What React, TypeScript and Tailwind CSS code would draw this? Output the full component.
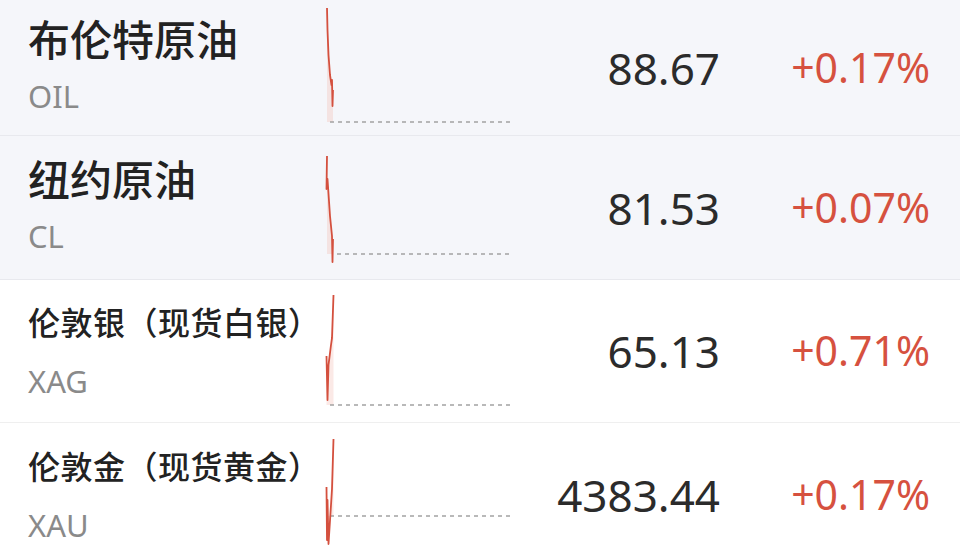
type Quote = {
  name: string;
  code: string;
  price: string;
  change: string;
  big: boolean;
  shaded: boolean;
  height: string;
  line: [number, number][];
  base: [number, number];
};

const quotes: Quote[] = [
  {
    name: '布伦特原油',
    code: 'OIL',
    price: '88.67',
    change: '+0.17%',
    big: true,
    shaded: true,
    height: 'h-[136px]',
    line: [[1, 8], [1.5, 30], [2.5, 55], [4, 75], [5.5, 85], [6, 80], [6.5, 106], [7, 90]],
    base: [122, 4],
  },
  {
    name: '纽约原油',
    code: 'CL',
    price: '81.53',
    change: '+0.07%',
    big: true,
    shaded: true,
    height: 'h-[144px]',
    line: [[1, 20], [0.5, 53], [1.5, 43], [4, 80], [6, 100], [6.5, 126], [7, 103]],
    base: [118, 11],
  },
  {
    name: '伦敦银（现货白银）',
    code: 'XAG',
    price: '65.13',
    change: '+0.71%',
    big: false,
    shaded: false,
    height: 'h-[143px]',
    line: [[0.5, 76], [1.5, 120], [2.5, 85], [5, 65], [6, 58], [7.5, 15]],
    base: [125, 4],
  },
  {
    name: '伦敦金（现货黄金）',
    code: 'XAU',
    price: '4383.44',
    change: '+0.17%',
    big: false,
    shaded: false,
    height: 'h-[144px]',
    line: [[0.5, 64], [1, 117], [1.5, 77], [2.5, 121], [5, 82], [6, 66], [7.5, 16]],
    base: [93, 4],
  },
];

function Spark({ q }: { q: Quote }) {
  const pts = q.line.map(([x, y]) => `${x},${y}`).join(' ');
  const first = q.line[0];
  const last = q.line[q.line.length - 1];
  const area = `${pts} ${last[0]},${q.base[0]} ${first[0]},${q.base[0]}`;
  return (
    <svg width="184" height="100%" className="block h-full overflow-visible">
      <polygon points={area} fill="#f2b7ad" opacity="0.3" />
      <line
        x1={q.base[1]}
        y1={q.base[0]}
        x2={184}
        y2={q.base[0]}
        stroke="#a3a3a3"
        strokeWidth="1.5"
        strokeDasharray="4 4"
      />
      <polyline
        points={pts}
        fill="none"
        stroke="#d4503e"
        strokeWidth="1.8"
        strokeLinejoin="round"
      />
    </svg>
  );
}

function Row({ q, last }: { q: Quote; last: boolean }) {
  return (
    <div
      className={`flex items-stretch ${q.height} ${q.shaded ? 'bg-[#f5f6fa]' : 'bg-white'} ${
        last ? '' : q.shaded ? 'border-b border-[#e8e9ee]' : 'border-b border-[#efefef]'
      }`}
    >
      <div className="w-[326px] pl-[28px] flex flex-col justify-center">
        <div
          className={`whitespace-nowrap font-medium text-[#222222] ${
            q.big ? 'text-[42px] leading-[56px]' : 'text-[32px] leading-[60px] tracking-[0.5px]'
          }`}
        >
          {q.name}
        </div>
        <div className="text-[31px] leading-[56px] text-[#8a8a8a]">{q.code}</div>
      </div>
      <div className="w-[184px]">
        <Spark q={q} />
      </div>
      <div className="flex-1 flex items-center justify-end text-[44px] text-[#2b2b2b]">
        {q.price}
      </div>
      <div className="w-[240px] pr-[30px] flex items-center justify-end text-[41px] text-[#d6513f]">
        {q.change}
      </div>
    </div>
  );
}

export default function App() {
  return (
    <div
      className="w-[960px] h-[555px] overflow-hidden bg-white"
      style={{ fontFamily: '"Noto Sans", "Noto Sans CJK SC", sans-serif' }}
    >
      {quotes.map((q, i) => (
        <Row key={q.code} q={q} last={i === quotes.length - 1} />
      ))}
    </div>
  );
}
